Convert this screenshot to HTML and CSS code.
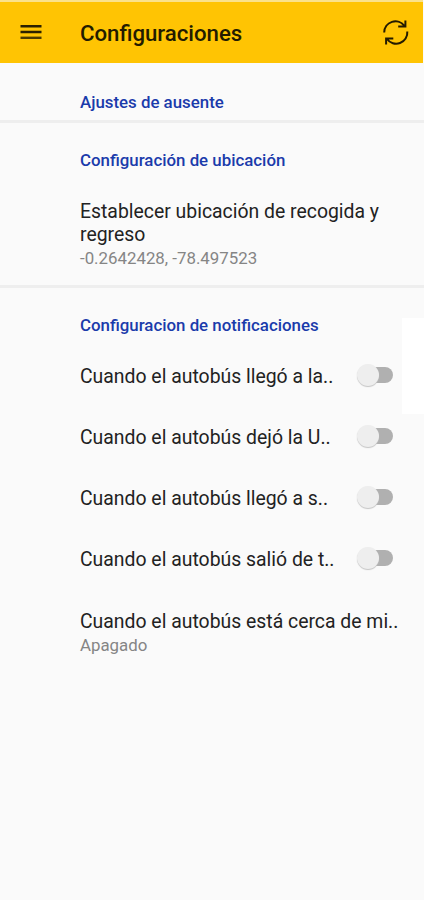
FILE: index.html
```html
<!DOCTYPE html>
<html lang="es">
<head>
<meta charset="utf-8">
<title>Configuraciones</title>
<link rel="stylesheet" href="styles.css">
</head>
<body>
<header class="toolbar">
  <svg class="menu" width="22" height="16" viewBox="0 0 22 16"><path d="M.5 2.3h21M.5 8h21" stroke="#2b2000" stroke-width="2.4"/><path d="M.5 13.8h21" stroke="#4e3b00" stroke-width="2.4"/></svg>
  <h1 class="title"><span>Configuraciones</span></h1>
  <svg class="refresh" width="28" height="28" viewBox="0 0 28 28" fill="none" stroke="#241b00" stroke-width="2"><path d="M3.2 14.5A11.2 11.2 0 0 1 23.5 8M24.4 2.5v6h-7.2M26.3 13.5A11.2 11.2 0 0 1 6 21M5.1 26.5v-6h7.2"/></svg>
</header>
<main>
  <section class="group away">
    <h2><span>Ajustes de ausente</span></h2>
  </section>
  <section class="group location">
    <h2><span>Configuración de ubicación</span></h2>
    <div class="item place">
      <p class="label"><span>Establecer ubicación de recogida y</span><br><span>regreso</span></p>
      <p class="value"><span>-0.2642428, -78.497523</span></p>
    </div>
  </section>
  <section class="group notices">
    <h2><span>Configuracion de notificaciones</span></h2>
    <div class="item row"><p class="label">Cuando el autobús llegó a la..</p><span class="switch"></span></div>
    <div class="item row"><p class="label">Cuando el autobús dejó la U..</p><span class="switch"></span></div>
    <div class="item row"><p class="label">Cuando el autobús llegó a s..</p><span class="switch"></span></div>
    <div class="item row"><p class="label">Cuando el autobús salió de t..</p><span class="switch"></span></div>
    <div class="item near">
      <p class="label">Cuando el autobús está cerca de mi..</p>
      <p class="value">Apagado</p>
    </div>
  </section>
</main>
<div class="scroll-handle"></div>
</body>
</html>
```
FILE: styles.css
```css
* { box-sizing: border-box; }
body {
  margin: 0;
  min-height: 900px;
  background: #fafafa;
  color: #222;
  font-family: Roboto, "Liberation Sans", sans-serif;
  overflow: hidden;
}
h1, h2, p { margin: 0; }
.toolbar {
  display: flex;
  align-items: center;
  height: 63px;
  margin-right: 1px;
  padding: 0 14px 0 20px;
  background: #ffc403;
  border-top: 2px solid #fbe28a;
}
.menu { flex: none; margin-top: -2px; }
.title {
  flex: 1;
  margin-left: 38px;
  font-size: 22.2px;
  line-height: 26px;
  font-weight: 500;
  color: #231b00;
}
.refresh { flex: none; margin-top: -2px; }
.group { padding-left: 80px; }
h2 {
  font-size: 16.85px;
  line-height: 20px;
  font-weight: 500;
  color: #1a3bab;
  white-space: nowrap;
}
.away { height: 60px; padding-top: 29px; border-bottom: 3px solid #eee; }
.location { height: 165px; padding-top: 27px; border-bottom: 3px solid #eee; }
.notices { padding-top: 27px; }
.place { margin-top: 30px; }
.label { font-size: 19.4px; line-height: 23px; white-space: nowrap; }
.value { font-size: 16.85px; line-height: 20px; margin-top: 2px; color: #858585; }
.row {
  display: flex;
  align-items: center;
  justify-content: space-between;
  height: 61px;
  padding-right: 31px;
}
.notices h2 { margin-bottom: 11px; }
.near { padding-top: 20px; }
.switch {
  position: relative;
  width: 30px;
  height: 16px;
  margin-top: -3px;
  border-radius: 8px;
  background: #b0b0b0;
}
.switch::before {
  content: "";
  position: absolute;
  left: -6px;
  top: -3px;
  width: 22px;
  height: 22px;
  border-radius: 50%;
  background: #eee;
  box-shadow: 0 1px 1px #c4c4c4;
}
.scroll-handle {
  position: absolute;
  right: 0;
  top: 318px;
  width: 22px;
  height: 96px;
  background: #fff;
}
```
